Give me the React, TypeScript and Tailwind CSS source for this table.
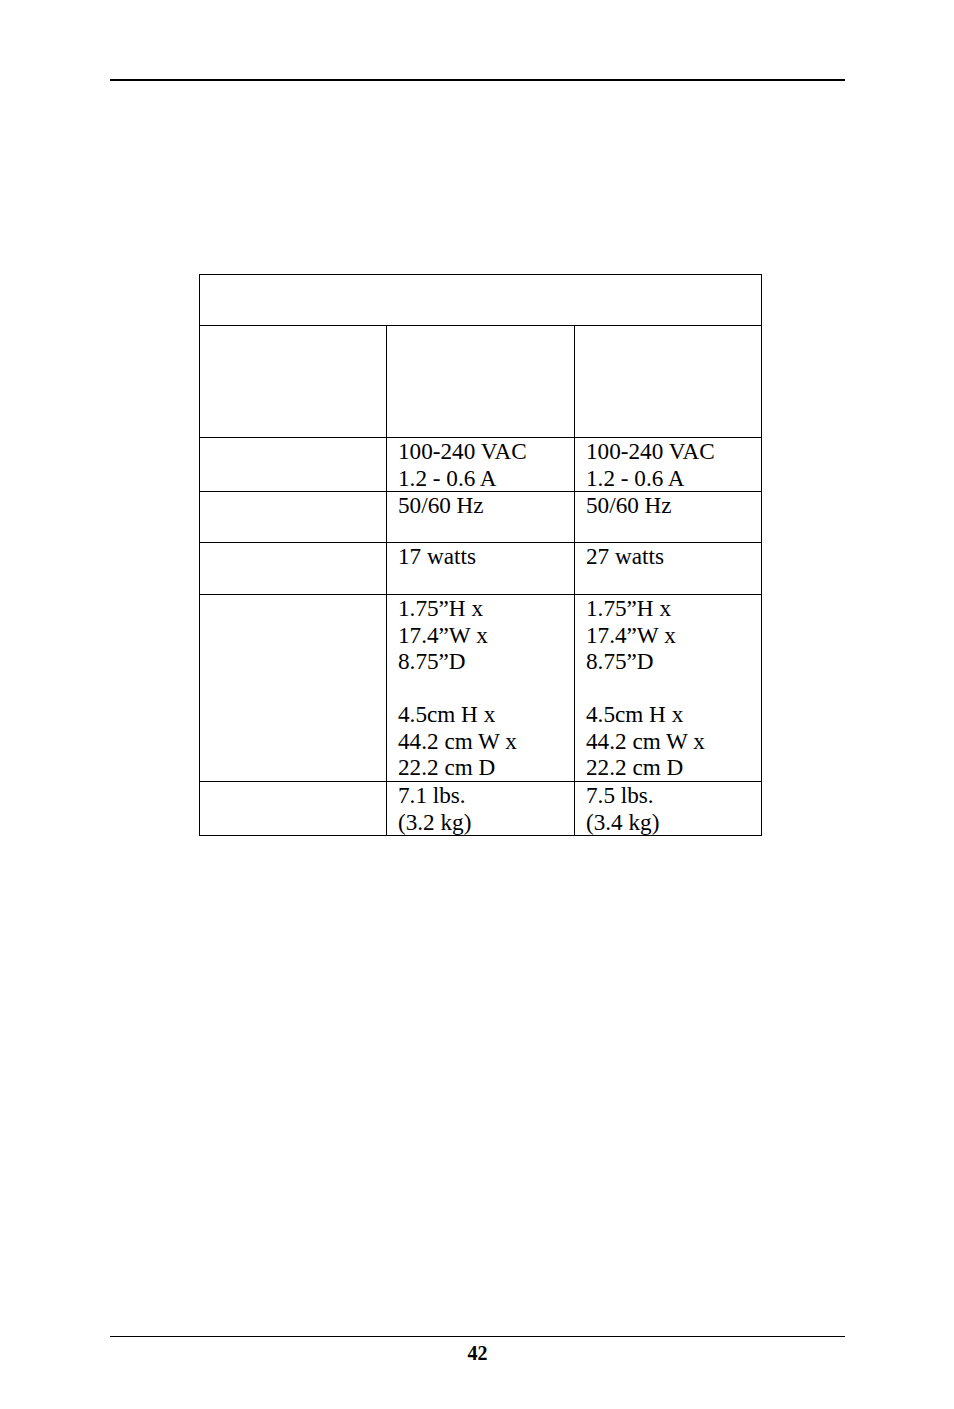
const rows: { h: string; a: string[]; b: string[] }[] = [
  { h: "h-[51px]", a: [], b: [] },
  { h: "h-[112px]", a: [], b: [] },
  { h: "h-[54px]", a: ["100-240 VAC", "1.2 - 0.6 A"], b: ["100-240 VAC", "1.2 - 0.6 A"] },
  { h: "h-[51px]", a: ["50/60 Hz"], b: ["50/60 Hz"] },
  { h: "h-[52px]", a: ["17 watts"], b: ["27 watts"] },
  {
    h: "h-[187px]",
    a: ["1.75\u201dH x", "17.4\u201dW x", "8.75\u201dD", "", "4.5cm H x", "44.2 cm W x", "22.2 cm D"],
    b: ["1.75\u201dH x", "17.4\u201dW x", "8.75\u201dD", "", "4.5cm H x", "44.2 cm W x", "22.2 cm D"],
  },
  { h: "h-[54px]", a: ["7.1 lbs.", "(3.2 kg)"], b: ["7.5 lbs.", "(3.4 kg)"] },
];

const Cell = ({ lines, w }: { lines: string[]; w: string }) => (
  <div className={`${w} border-r border-black pl-[11px] text-[23.2px] leading-[26.5px]`}>
    {lines.map((l, i) => (
      <div key={i} className="h-[26.5px] whitespace-nowrap">
        {l || "\u00a0"}
      </div>
    ))}
  </div>
);

export default function App() {
  return (
    <div className="w-[954px] h-[1409px] bg-white text-black font-['Liberation_Serif','Times_New_Roman',serif] flex flex-col">
      {/* header rule */}
      <div className="mt-[79px] ml-[110px] w-[735px] h-[2px] bg-black" />

      {/* spec table */}
      <div className="mt-[193px] ml-[199px] w-[563px] border-l border-t border-black flex flex-col">
        {rows.map((r, i) => (
          <div key={i} className={`${r.h} flex border-b border-black`}>
            {i === 0 ? (
              <div className="w-[562px] border-r border-black" />
            ) : (
              <>
                <Cell lines={[]} w="w-[187px]" />
                <Cell lines={r.a} w="w-[188px]" />
                <Cell lines={r.b} w="w-[187px]" />
              </>
            )}
          </div>
        ))}
      </div>

      {/* footer */}
      <div className="mt-auto mb-[43px] ml-[110px] w-[735px] flex flex-col items-center">
        <div className="w-full h-px bg-black" />
        <div className="mt-[3px] text-[20px] font-bold leading-[26px]">42</div>
      </div>
    </div>
  );
}
